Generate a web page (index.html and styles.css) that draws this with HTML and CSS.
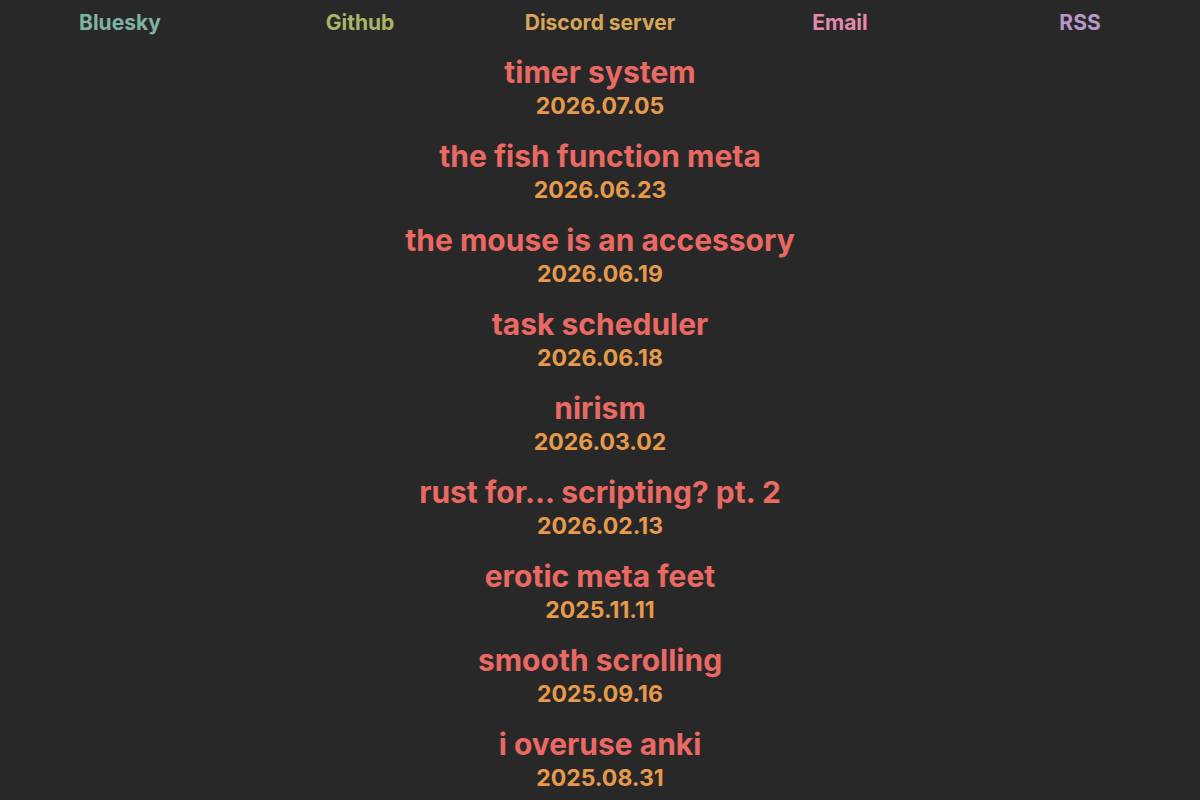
FILE: index.html
```html
<!DOCTYPE html>
<html>
<head>
<meta charset="utf-8">
<link rel="stylesheet" href="styles.css">
</head>
<body>
<nav class="nav">
  <a class="nav-link c-aqua" href="#">Bluesky</a>
  <a class="nav-link c-green" href="#">Github</a>
  <a class="nav-link c-yellow" href="#">Discord server</a>
  <a class="nav-link c-pink" href="#">Email</a>
  <a class="nav-link c-purple" href="#">RSS</a>
</nav>
<main class="posts">
  <a class="post" href="#"><span class="title">timer system</span><span class="date">2026.07.05</span></a>
  <a class="post" href="#"><span class="title">the fish function meta</span><span class="date">2026.06.23</span></a>
  <a class="post" href="#"><span class="title">the mouse is an accessory</span><span class="date">2026.06.19</span></a>
  <a class="post" href="#"><span class="title">task scheduler</span><span class="date">2026.06.18</span></a>
  <a class="post" href="#"><span class="title">nirism</span><span class="date">2026.03.02</span></a>
  <a class="post" href="#"><span class="title">rust for... scripting? pt. 2</span><span class="date">2026.02.13</span></a>
  <a class="post" href="#"><span class="title">erotic meta feet</span><span class="date">2025.11.11</span></a>
  <a class="post" href="#"><span class="title">smooth scrolling</span><span class="date">2025.09.16</span></a>
  <a class="post" href="#"><span class="title">i overuse anki</span><span class="date">2025.08.31</span></a>
</main>
</body>
</html>
```
FILE: styles.css
```css
html, body {
  margin: 0;
  padding: 0;
  background: #292829;
  font-family: Inter, "Noto Sans", sans-serif;
  font-weight: 700;
}
.nav {
  display: grid;
  grid-template-columns: repeat(5, 1fr);
  height: 44px;
  padding-top: 1px;
  box-sizing: border-box;
  align-items: center;
}
.nav-link {
  text-align: center;
  text-decoration: none;
  font-size: 21px;
  line-height: 24px;
}
.c-aqua { color: #7fb3a1; }
.c-green { color: #a9b665; }
.c-yellow { color: #d8a657; }
.c-pink { color: #e48aa8; }
.c-purple { color: #b996cc; }
.posts {
  display: flex;
  flex-direction: column;
  align-items: center;
}
.post {
  display: flex;
  flex-direction: column;
  align-items: center;
  text-decoration: none;
  height: 84px;
}
.title {
  color: #ea6962;
  font-size: 30px;
  line-height: 36px;
  margin-top: 10px;
}
.date {
  color: #e69a4a;
  font-size: 23px;
  line-height: 30px;
  padding-top: 1px;
}
```
